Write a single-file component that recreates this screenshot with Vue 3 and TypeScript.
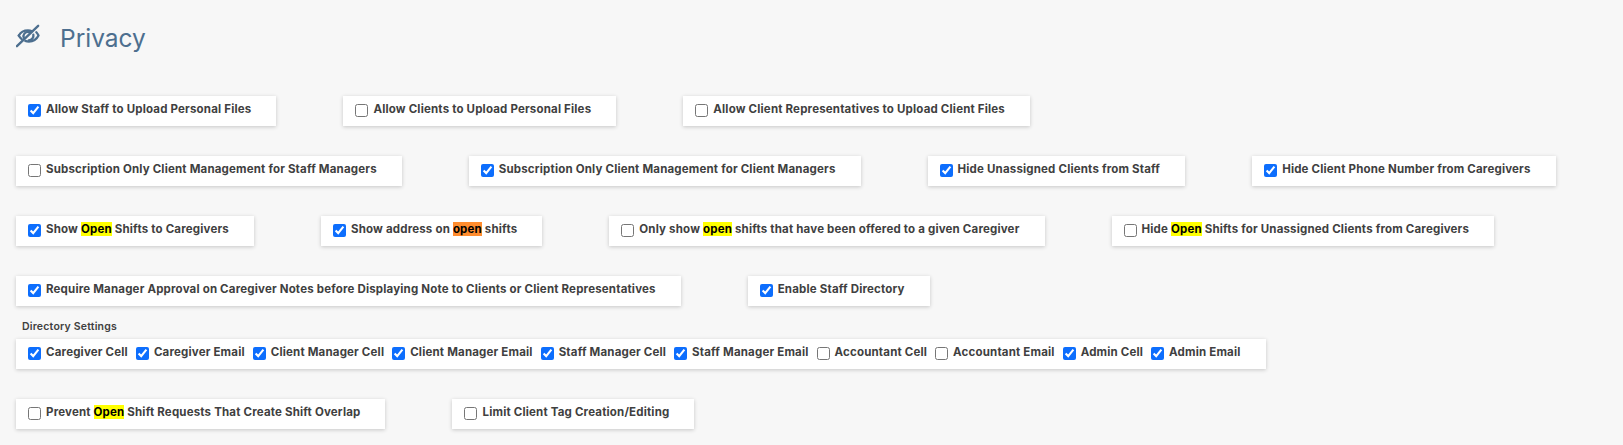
<script setup lang="ts">
type Seg = { t: string; mark?: 'y' | 'o' }
type Item = { on: boolean; segs: Seg[] }
const s = (t: string): Seg[] => [{ t }]
const rows1: Item[][] = [
  [
    { on: true, segs: s('Allow Staff to Upload Personal Files') },
    { on: false, segs: s('Allow Clients to Upload Personal Files') },
    { on: false, segs: s('Allow Client Representatives to Upload Client Files') },
  ],
  [
    { on: false, segs: s('Subscription Only Client Management for Staff Managers') },
    { on: true, segs: s('Subscription Only Client Management for Client Managers') },
    { on: true, segs: s('Hide Unassigned Clients from Staff') },
    { on: true, segs: s('Hide Client Phone Number from Caregivers') },
  ],
  [
    { on: true, segs: [{ t: 'Show ' }, { t: 'Open', mark: 'y' }, { t: ' Shifts to Caregivers' }] },
    { on: true, segs: [{ t: 'Show address on ' }, { t: 'open', mark: 'o' }, { t: ' shifts' }] },
    { on: false, segs: [{ t: 'Only show ' }, { t: 'open', mark: 'y' }, { t: ' shifts that have been offered to a given Caregiver' }] },
    { on: false, segs: [{ t: 'Hide ' }, { t: 'Open', mark: 'y' }, { t: ' Shifts for Unassigned Clients from Caregivers' }] },
  ],
  [
    { on: true, segs: s('Require Manager Approval on Caregiver Notes before Displaying Note to Clients or Client Representatives') },
    { on: true, segs: s('Enable Staff Directory') },
  ],
]
const directory: Item[] = [
  { on: true, segs: s('Caregiver Cell') },
  { on: true, segs: s('Caregiver Email') },
  { on: true, segs: s('Client Manager Cell') },
  { on: true, segs: s('Client Manager Email') },
  { on: true, segs: s('Staff Manager Cell') },
  { on: true, segs: s('Staff Manager Email') },
  { on: false, segs: s('Accountant Cell') },
  { on: false, segs: s('Accountant Email') },
  { on: true, segs: s('Admin Cell') },
  { on: true, segs: s('Admin Email') },
]
const lastRow: Item[] = [
  { on: false, segs: [{ t: 'Prevent ' }, { t: 'Open', mark: 'y' }, { t: ' Shift Requests That Create Shift Overlap' }] },
  { on: false, segs: s('Limit Client Tag Creation/Editing') },
]
</script>

<template>
  <main class="page">
    <h1 class="title">
      <svg class="icon" viewBox="0 0 26 24" fill="none" stroke="#4d6f8f" stroke-width="2.5" stroke-linecap="round" stroke-linejoin="round">
        <path d="M3 11.500C5 8 9 6 13 6c1.600 0 3 .3 4.300.9" />
        <path d="M22 8c1 1 1.800 2.200 2.400 3.500-2 4-6 6.500-10.400 6.500-1.400 0-2.700-.2-3.900-.7" />
        <path d="M3 11.500c.8 1.600 1.900 2.900 3.200 4" />
        <path d="M8.500 14C7 10.500 10 7.500 13 7.500c1 0 1.800.2 2.500.7" />
        <path d="M18.800 10.500c.6 3-1.500 6-5 6.300" />
        <path d="M1 23 24 1" />
      </svg>
      <span>Privacy</span>
    </h1>

    <section class="rows">
      <div v-for="(row, i) in rows1" :key="i" class="row">
        <label v-for="(item, j) in row" :key="j" class="card">
          <input type="checkbox" class="box" :checked="item.on" />
          <span class="text"><template v-for="(seg, k) in item.segs" :key="k"><mark v-if="seg.mark" :class="seg.mark === 'y' ? 'my' : 'mo'">{{ seg.t }}</mark><template v-else>{{ seg.t }}</template></template></span>
        </label>
      </div>
    </section>

    <div class="dir-label">Directory Settings</div>
    <div class="row">
      <div class="card dir">
        <label v-for="(item, j) in directory" :key="j" class="dir-item">
          <input type="checkbox" class="box" :checked="item.on" />
          <span class="text">{{ item.segs[0].t }}</span>
        </label>
      </div>
    </div>

    <div class="row last">
      <label v-for="(item, j) in lastRow" :key="j" class="card">
        <input type="checkbox" class="box" :checked="item.on" />
        <span class="text"><template v-for="(seg, k) in item.segs" :key="k"><mark v-if="seg.mark" class="my">{{ seg.t }}</mark><template v-else>{{ seg.t }}</template></template></span>
      </label>
    </div>
  </main>
</template>

<style>
html, body { margin: 0; background: #f7f7f7; }
</style>

<style scoped>
.page {
  box-sizing: border-box;
  height: 445px;
  padding: 22px 16px 0;
  font-family: Inter, "Liberation Sans", sans-serif;
  background: #f7f7f7;
  overflow: hidden;
}
.title {
  display: flex;
  align-items: center;
  gap: 20px;
  margin: 0 0 43px;
  height: 31px;
  font-size: 24.5px;
  font-weight: 400;
  color: #4d6f8f;
}
.icon { width: 24px; height: 24px; margin-top: -4px; }
.rows { display: flex; flex-direction: column; gap: 30px; }
.row { display: flex; gap: 67px; }
.card {
  display: flex;
  align-items: center;
  box-sizing: border-box;
  height: 30px;
  padding: 0 25px 0 12px;
  background: #fff;
  box-shadow: 0 1px 4px rgba(0, 0, 0, 0.2);
}
.box {
  width: 13px;
  height: 13px;
  margin: 0 5px 1px 0;
  flex: none;
  accent-color: #0d6efd;
}
.text {
  font-size: 11.5px;
  font-weight: 700;
  letter-spacing: 0.18px;
  line-height: 14px;
  color: #404040;
  white-space: nowrap;
  margin-top: -5px;
}
mark { color: #000; padding: 0; }
.my { background: #ffff00; }
.mo { background: #ff8c2e; }
.dir-label {
  margin: 13px 0 0 6px;
  height: 20px;
  line-height: 15px;
  font-size: 10.5px;
  letter-spacing: 0.2px;
  font-weight: 600;
  color: #404040;
}
.dir { gap: 8px; }
.dir-item { display: flex; align-items: center; }
.last { margin-top: 30px; }
</style>
